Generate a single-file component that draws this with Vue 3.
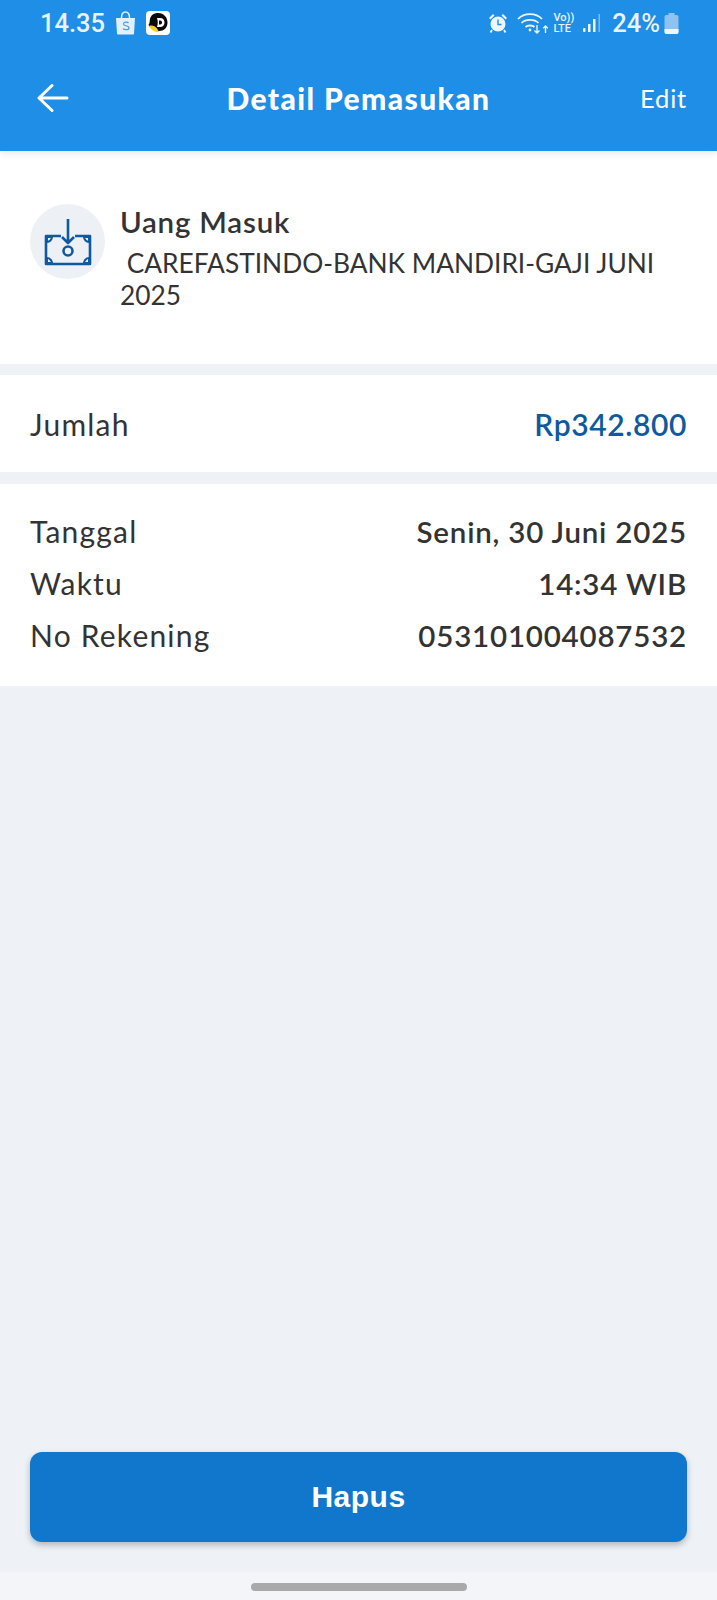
<script setup>
const details = [
  { label: 'Tanggal', value: 'Senin, 30 Juni 2025' },
  { label: 'Waktu', value: '14:34 WIB' },
  { label: 'No Rekening', value: '053101004087532' },
]
</script>

<template>
  <div class="screen">
    <header class="top">
      <div class="status">
        <div class="status-left">
          <span class="clock">14.35</span>
          <svg class="bag" width="21" height="24" viewBox="0 0 21 24">
            <path d="M1 7h19l-1 15.500a1 1 0 0 1-1 1H3a1 1 0 0 1-1-1z" fill="#e4f0fb" />
            <path d="M6.500 7c0-8 8-8 8 0" fill="none" stroke="#e4f0fb" stroke-width="1.500" />
            <path d="M13.500 12c-1-1.200-5-1.300-5 .9 0 2.400 5.500 1.300 5.500 4 0 2.300-4.600 2.200-6 .8" fill="none" stroke="#4c9be6" stroke-width="1.200" />
          </svg>
          <svg class="app" width="24" height="24" viewBox="0 0 24 24">
            <rect width="24" height="24" rx="4" fill="#fff" />
            <path d="M2.500 14c1.500-2 1-4 1.500-6 1-4 4-6 8-6 6 0 9.500 4.500 9.500 9.500 0 5-3.500 8.500-8.500 8.500-4 0-8-2-10.500-6z" fill="#0b0b0b" />
            <path d="M3 15c3-1 6 0 8 2.500l2 3.500c-4 .5-8-2-10-6z" fill="#f6d21f" />
            <path d="M11 7h3c3 0 4.500 2 4.500 4.500S17 16 14 16h-3c1-3 1-6 0-9z" fill="#fff" />
            <path d="M13 9.500h1c1.500 0 2 1 2 2s-.5 2-2 2h-1z" fill="#0b0b0b" />
          </svg>
        </div>
        <div class="status-right">
          <svg width="20" height="22" viewBox="0 0 20 22" fill="#eef6fd">
            <circle cx="10" cy="12" r="7.500" />
            <path d="M1 6l4-4 1.500 1.500-4 4zM19 6l-4-4-1.500 1.500 4 4z" />
            <path d="M10 7.500V12.500h3.500" fill="none" stroke="#1f8ee6" stroke-width="1.400" />
            <path d="M4 18l-1.500 2.500M16 18l1.500 2.500" stroke="#eef6fd" stroke-width="1.800" />
          </svg>
          <svg class="wifi" width="32" height="22" viewBox="0 0 32 22" fill="none" stroke="#eef6fd" stroke-width="1.800">
            <path d="M1 7c6-6.500 18-6.500 24 0M4.500 11c4-4.200 13-4.200 17 0M8.500 15c2-2 7-2 9 0" />
            <circle cx="13" cy="18" r="1.400" fill="#eef6fd" stroke="none" />
            <path d="M20 13v8m-2.500-2.500 2.500 2.500 2.500-2.500M28.500 21v-7m-2.200 2.200 2.200-2.200 2.200 2.200" stroke-width="1.400" />
          </svg>
          <div class="volte"><span>Vo))</span><span>LTE</span></div>
          <svg class="signal" width="18" height="20" viewBox="0 0 18 20">
            <rect x="0" y="15" width="2.500" height="4" rx="1" fill="#eef6fd" />
            <rect x="5" y="11" width="2.500" height="8" fill="#eef6fd" />
            <rect x="10" y="6" width="2.500" height="13" fill="#eef6fd" />
            <rect x="15.500" y="1" width="1.500" height="18" fill="#7fbcf0" />
          </svg>
          <span class="percent">24%</span>
          <svg class="battery" width="15" height="22" viewBox="0 0 15 22">
            <path d="M4.500 1h6v2h2.500a2 2 0 0 1 1.500 2v15a2 2 0 0 1-1.500 2H2a2 2 0 0 1-1.500-2V5A2 2 0 0 1 2 3h2.500z" fill="#8dc2f1" />
            <path d="M.5 17h14v3a2 2 0 0 1-1.500 2H2a2 2 0 0 1-1.500-2z" fill="#eef6fd" />
          </svg>
        </div>
      </div>
      <div class="nav">
        <svg class="back" width="32" height="32" viewBox="0 0 32 32" fill="none" stroke="#fff" stroke-width="3" stroke-linecap="round" stroke-linejoin="round">
          <path d="M2 16h28M15 3.500 2 16l13 12.500" />
        </svg>
        <h1>Detail Pemasukan</h1>
        <span class="edit">Edit</span>
      </div>
    </header>

    <main class="content">
      <section class="card summary">
        <div class="icon-wrap">
          <svg width="48" height="48" viewBox="0 0 48 48" fill="none" stroke="#0f5a9f" stroke-width="2.600" stroke-linejoin="round">
            <path d="M17 18H2v28h44V18H31" />
            <path d="M24 1v24M18 19l6 6 6-6" />
            <circle cx="24" cy="33" r="4.500" />
            <path d="M3 24c3 0 5-3 5-5H3zM45 24c-3 0-5-3-5-5h5zM3 40c3 0 5 3 5 5H3zM45 40c-3 0-5 3-5 5h5z" stroke-width="2" />
          </svg>
        </div>
        <div class="summary-text">
          <div class="title">Uang Masuk</div>
          <p class="desc">&nbsp;CAREFASTINDO-BANK MANDIRI-GAJI JUNI 2025</p>
        </div>
      </section>

      <section class="card amount">
        <span class="label">Jumlah</span>
        <span class="total">Rp342.800</span>
      </section>

      <section class="card info">
        <div v-for="row in details" :key="row.label" class="info-row">
          <span class="label">{{ row.label }}</span>
          <span class="value">{{ row.value }}</span>
        </div>
      </section>

      <div class="actions">
        <button class="delete">Hapus</button>
      </div>
    </main>

    <div class="home-bar"><span></span></div>
  </div>
</template>

<style scoped>
.screen {
  display: flex;
  flex-direction: column;
  width: 717px;
  height: 1600px;
  background: #eef1f6;
  font-family: Lato, "Noto Sans", sans-serif;
  color: #333;
}

.top {
  flex: none;
  height: 151px;
  background: #1f8ee6;
  color: #fff;
  box-shadow: 0 2px 8px rgba(0, 0, 0, 0.1);
  position: relative;
  z-index: 1;
}

.status {
  display: flex;
  justify-content: space-between;
  align-items: center;
  height: 46px;
  padding: 0 38px 0 40px;
}

.status-left,
.status-right {
  display: flex;
  align-items: center;
}

.status-left {
  gap: 10px;
}

.status-right {
  gap: 8px;
}

.clock,
.percent {
  font-family: Roboto, sans-serif;
  font-size: 25.500px;
  font-weight: 500;
  color: #e9f3fc;
}

.wifi {
  margin-left: 1px;
}

.volte {
  display: flex;
  flex-direction: column;
  margin-left: -4px;
  font-family: Roboto, sans-serif;
  font-size: 11px;
  font-weight: 500;
  line-height: 11px;
  color: #e9f3fc;
}

.signal {
  margin-left: 1px;
}

.percent {
  margin-left: 3px;
}

.battery {
  margin-left: -4px;
}

.nav {
  display: flex;
  align-items: center;
  justify-content: space-between;
  height: 60px;
  padding: 0 30px 0 37px;
  margin-top: 22px;
  position: relative;
}

.nav h1 {
  position: absolute;
  left: 0;
  right: 0;
  margin: 0;
  text-align: center;
  font-size: 30px;
  font-weight: 900;
  letter-spacing: 1.4px;
}

.edit {
  font-size: 25.500px;
  letter-spacing: 0.8px;
}

.content {
  flex: 1;
  display: flex;
  flex-direction: column;
  gap: 11px;
}

.card {
  background: #fff;
}

.summary {
  display: flex;
  gap: 15px;
  height: 213px;
  padding: 53px 30px 0;
  box-sizing: border-box;
}

.icon-wrap {
  flex: none;
  display: flex;
  align-items: center;
  justify-content: center;
  width: 75px;
  height: 75px;
  border-radius: 50%;
  background: #edf0f5;
}

.title {
  font-size: 29.500px;
  font-weight: 600;
  line-height: 32px;
  margin-top: 2px;
  letter-spacing: 0.8px;
}

.desc {
  margin: 9px 0 0;
  font-size: 26.300px;
  line-height: 32px;
}

.amount {
  display: flex;
  justify-content: space-between;
  align-items: center;
  height: 97px;
  padding: 0 30px;
}

.label {
  font-size: 30px;
  letter-spacing: 1.200px;
}

.total {
  font-size: 30px;
  font-weight: 600;
  letter-spacing: 0.6px;
  color: #0f5a9f;
}

.info {
  display: flex;
  flex-direction: column;
  gap: 20px;
  padding: 31px 30px 30px;
  height: 202px;
  box-sizing: border-box;
  margin-top: 1px;
}

.info-row {
  display: flex;
  justify-content: space-between;
  align-items: center;
  height: 32px;
}

.value {
  font-size: 29.500px;
  font-weight: 600;
  letter-spacing: 0.8px;
}

.actions {
  margin-top: auto;
  padding: 0 30px 30px;
}

.delete {
  display: block;
  width: 100%;
  height: 90px;
  border: 0;
  border-radius: 12px;
  background: #1177cc;
  color: #fff;
  font-family: "Liberation Sans", Arial, sans-serif;
  font-size: 30px;
  font-weight: 700;
  letter-spacing: 0.5px;
  box-shadow: 0 3px 6px rgba(0, 0, 0, 0.25);
}

.home-bar {
  flex: none;
  display: flex;
  justify-content: center;
  height: 28px;
  background: #f4f5f8;
  padding-top: 11px;
  box-sizing: border-box;
}

.home-bar span {
  width: 216px;
  height: 8px;
  border-radius: 4px;
  background: #a9a9ab;
}
</style>
